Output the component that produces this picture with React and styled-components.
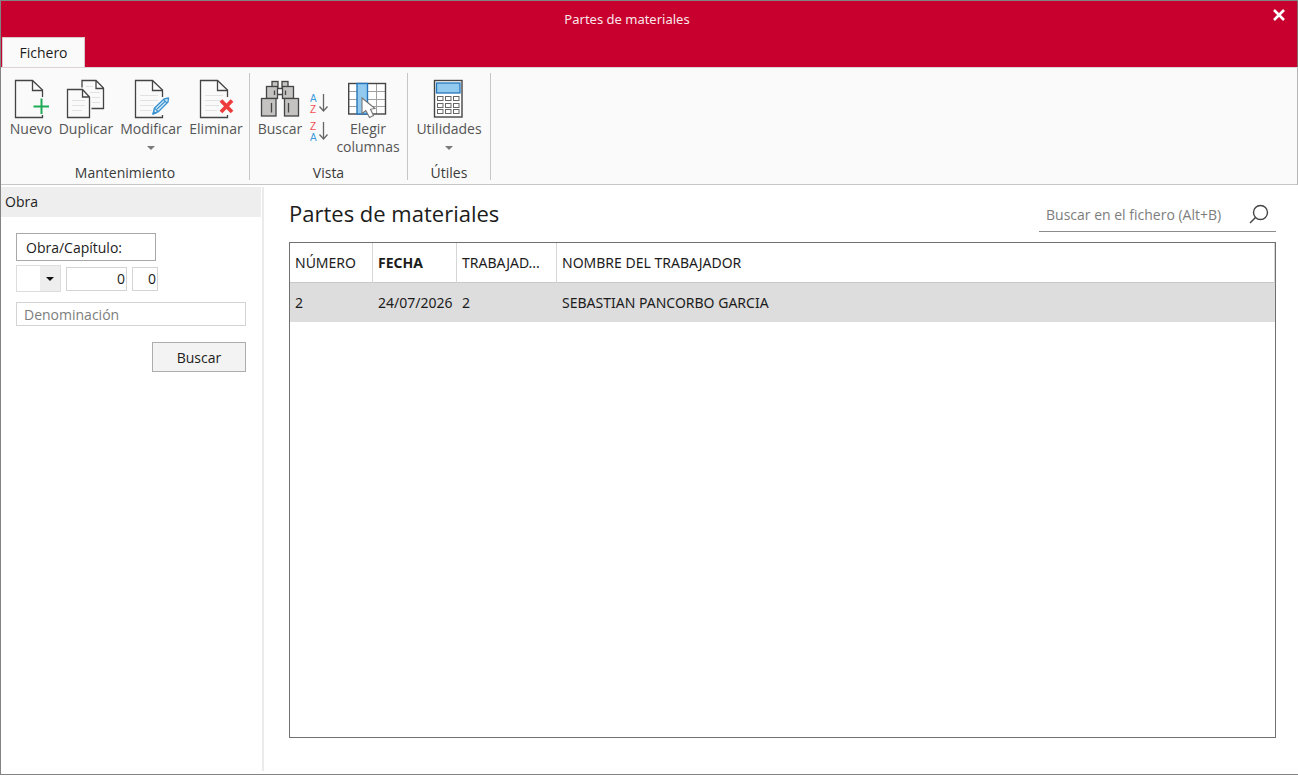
import React from "react";
import styled, { createGlobalStyle } from "styled-components";

const GlobalStyle = createGlobalStyle`
  *, *::before, *::after { box-sizing: border-box; }
  body { margin: 0; background: #fff; }
  body, button, input, select {
    font-family: "Open Sans", "Noto Sans", sans-serif;
    font-size: 14px;
    color: #1c1c1c;
  }
  button { cursor: pointer; }
`;

const Window = styled.div`
  display: flex;
  flex-direction: column;
  min-height: calc(100vh - 1px);
  border: 1px solid #838383;
  border-right: 0;
`;

const TitleBar = styled.header`
  display: grid;
  grid-template-rows: 36px 30px;
  background: #c8002d;
  border-right: 1px solid #85646c;
`;

const TitleRow = styled.div`
  display: grid;
  grid-template-columns: 48px 1fr 48px;
  align-items: center;
`;

const WindowTitle = styled.div`
  grid-column: 2;
  padding-right: 48px;
  margin-right: -4px;
  font-family: "Noto Sans", "Open Sans", sans-serif;
  font-size: 13px;
  text-align: center;
  color: #fae6ea;
`;

const CloseButton = styled.button`
  display: flex;
  justify-content: center;
  align-self: start;
  width: 36px;
  margin-left: 12px;
  padding: 8px 0;
  border: 0;
  background: none;
`;

const Tab = styled.button`
  justify-self: start;
  align-self: end;
  width: 83px;
  height: 30px;
  margin-left: 1px;
  padding: 0;
  border: 1px solid #d9c9cc;
  border-bottom: 0;
  background: #fafafa;
`;

const Ribbon = styled.div`
  display: flex;
  height: 118px;
  padding: 5px 0 4px;
  border-top: 1px solid #dcd3d5;
  border-right: 1px solid #b5b5b5;
  border-bottom: 1px solid #c6c6c6;
  background: #fafafa;
`;

const Group = styled.section`
  display: flex;
  flex-direction: column;
  justify-content: space-between;
  padding: 0 4px;
  border-right: 1px solid #c6c6c6;
`;

const GroupTools = styled.div`
  display: flex;
  align-items: flex-start;
`;

const GroupLabel = styled.div`
  line-height: 14px;
  text-align: center;
  color: #3a3a3a;
`;

const Tool = styled.button`
  display: flex;
  flex-direction: column;
  align-items: center;
  width: ${(p) => p.$width}px;
  padding: 6px 0 0;
  border: 0;
  background: none;
  color: #555;
  line-height: 18px;
  white-space: nowrap;
`;

const ToolIcon = styled.svg`
  display: block;
  width: 40px;
  height: 40px;
  margin-bottom: 1px;
`;

const Caret = styled.span`
  margin-top: 8px;
  border: 4px solid transparent;
  border-top-color: #7a7a7a;
  border-bottom: 0;
`;

const SortTools = styled.div`
  display: flex;
  flex-direction: column;
  width: 27px;
  padding-top: 17px;
`;

const SortButton = styled.button`
  display: flex;
  height: 28px;
  padding: 2px 3px;
  border: 0;
  background: none;
`;

const Body = styled.div`
  display: flex;
  flex: 1;
  padding: 2px 0 3px;
`;

const Sidebar = styled.aside`
  width: 263px;
  border-right: 2px solid #ebebeb;
`;

const SidebarTitle = styled.h2`
  margin: 0;
  padding: 0 4px;
  width: 260px;
  font-size: 14px;
  font-weight: 400;
  line-height: 30px;
  background: #eee;
`;

const Filters = styled.form`
  display: flex;
  flex-direction: column;
  align-items: flex-start;
  padding: 16px 16px 0 15px;
`;

const FieldButton = styled.button`
  width: 140px;
  height: 28px;
  padding: 0 9px;
  border: 1px solid #a8a8a8;
  background: #fff;
  text-align: left;
`;

const FieldRow = styled.div`
  display: flex;
  align-items: center;
  gap: 5px;
  margin: 4px 0 10px;
`;

const SelectBox = styled.div`
  position: relative;
  width: 45px;
  height: 27px;
`;

const Select = styled.select`
  appearance: none;
  width: 100%;
  height: 100%;
  border: 1px solid #ddd;
  border-radius: 0;
  background: linear-gradient(to right, #fff 23px, #eee 23px);
`;

const SelectArrow = styled.span`
  position: absolute;
  right: 7px;
  top: 12px;
  border: 4px solid transparent;
  border-top-color: #111;
  border-bottom: 0;
  pointer-events: none;
`;

const TextField = styled.input`
  width: ${(p) => p.$width || "100%"};
  height: 24px;
  padding: 0 ${(p) => (p.$number ? 1 : 7)}px;
  border: 1px solid #d4d4d4;
  text-align: ${(p) => (p.$number ? "right" : "left")};
  &::placeholder { color: #7d7d7d; opacity: 1; }
`;

const SubmitButton = styled.button`
  align-self: flex-end;
  width: 94px;
  height: 30px;
  margin-top: 16px;
  border: 1px solid #adadad;
  background: #f3f3f3;
`;

const Main = styled.main`
  display: flex;
  flex: 1;
  flex-direction: column;
  padding: 10px 22px 33px 25px;
`;

const MainHeader = styled.div`
  display: flex;
  justify-content: space-between;
  align-items: flex-start;
  margin-bottom: 10px;
`;

const PageTitle = styled.h1`
  margin: 0;
  font-size: 22px;
  font-weight: 400;
  line-height: 32px;
`;

const SearchField = styled.label`
  display: flex;
  align-items: center;
  width: 237px;
  height: 35px;
  padding: 0 7px;
  border-bottom: 1px solid #8c8c8c;
`;

const SearchInput = styled.input`
  flex: 1;
  min-width: 0;
  padding: 0;
  border: 0;
  outline: 0;
  &::placeholder { color: #7d7d7d; opacity: 1; }
`;

const TableFrame = styled.div`
  flex: 1;
  border: 1px solid #707070;
`;

const Table = styled.table`
  width: 100%;
  table-layout: fixed;
  border-collapse: separate;
  border-spacing: 0;
  font-family: "Noto Sans", "Open Sans", sans-serif;
  font-size: 14px;
`;

const HeadCell = styled.th`
  width: ${(p) => p.$width || "auto"};
  height: 40px;
  padding: 0 5px;
  border-right: 1px solid #d6d6d6;
  border-bottom: 1px solid #c8c8c8;
  font-weight: ${(p) => (p.$sorted ? 700 : 400)};
  text-align: left;
  white-space: nowrap;
`;

const Cell = styled.td`
  height: 39px;
  padding: 0 5px;
  background: #ddd;
  white-space: nowrap;
`;

const Page = ({ lines }) => (
  <g fill="none">
    <path d="M31.5 18V11L21.5 1.5H4.5V38.5H31.5V36" fill="none" stroke="#444" strokeWidth="1.3" />
    <path d="M21.5 1.5V11.5H31.5" stroke="#444" strokeWidth="1.3" />
    {lines && <path d="M9 16.5H27M9 21.5H27M9 26.5H23M9 31.5H21" stroke="#e2e2e2" />}
  </g>
);

const NewIcon = () => (
  <ToolIcon viewBox="0 0 40 40" aria-hidden="true">
    <Page />
    <path d="M30.5 19.5V35M22.5 27.5H38" stroke="#1fab55" strokeWidth="2" />
  </ToolIcon>
);

const DuplicateIcon = () => (
  <ToolIcon viewBox="0 0 40 40" aria-hidden="true" fill="none" stroke="#444" strokeWidth="1.3">
    <path d="M16 8.5V1.5H30L37.5 9V29.5H25.5M30 1.5V9.5H37.5" />
    <path d="M1.5 10.5H16.5L23.5 18V38.5H1.5ZM16.5 10.5V18H23.5" />
    <path d="M20 7.5H27M24 13.5H34M26 18.5H34M26 23.5H34M6 21.5H19M6 26.5H19M6 31.5H16" stroke="#e2e2e2" strokeWidth="1" />
  </ToolIcon>
);

const EditIcon = () => (
  <ToolIcon viewBox="0 0 40 40" aria-hidden="true">
    <Page lines />
    <path d="M22 35L23.5 29L33 20L37.5 19L37 23L27.5 32.5Z" fill="#d9edf9" stroke="#3b93cf" strokeWidth="1.4" strokeLinejoin="round" />
    <path d="M24 29.5L27 32.5M32.5 20.5L36 24M26 30L34 22.5M22 35L24.5 34.3L22.7 32.5Z" fill="#3b93cf" stroke="#3b93cf" strokeWidth="1.1" />
  </ToolIcon>
);

const DeleteIcon = () => (
  <ToolIcon viewBox="0 0 40 40" aria-hidden="true">
    <Page lines />
    <path d="M25 21.5L36 33M36 21.5L25 33" stroke="#ee3b3b" strokeWidth="3.8" />
  </ToolIcon>
);

const BinocularsIcon = () => (
  <ToolIcon viewBox="0 0 40 40" aria-hidden="true" fill="#c4c3c2" stroke="#444" strokeWidth="1.3">
    <rect x="12" y="2.5" width="6" height="5.5" />
    <rect x="22" y="2.5" width="6" height="5.5" />
    <path d="M17 9.5H23V15.5H17Z" fill="#fff" />
    <rect x="6.5" y="7.5" width="11" height="12" />
    <rect x="22.5" y="7.5" width="11" height="12" />
    <rect x="1.5" y="19.5" width="14.5" height="17.5" />
    <rect x="24.5" y="19.5" width="14" height="17.5" />
    <path d="M14.5 11.5V16M25.5 11.5V16M11.5 24V33.5M28.5 24V33.5" />
  </ToolIcon>
);

const ColumnsIcon = () => (
  <ToolIcon viewBox="0 0 40 40" aria-hidden="true" fill="none">
    <rect x="0.7" y="4.5" width="36.8" height="30.5" fill="#fff" />
    <path d="M0 12.5H37M0 20.5H37M0 27.5H37M28.5 5V35" stroke="#a0a0a0" />
    <rect x="0.7" y="4.5" width="36.8" height="30.5" stroke="#444" strokeWidth="1.4" />
    <rect x="9" y="4.5" width="10.5" height="30.5" fill="#92c9ef" stroke="#2577bd" strokeWidth="1.4" />
    <path d="M14 19V34.5L17.8 31.5L21.5 38.5L25.5 36.5L22.5 30.3L27 29.5Z" fill="#fff" stroke="#777" strokeWidth="1.1" />
  </ToolIcon>
);

const CalculatorIcon = () => (
  <ToolIcon viewBox="0 0 40 40" aria-hidden="true" fill="#fff" stroke="#444">
    <rect x="5.5" y="1.5" width="27.5" height="36.5" strokeWidth="1.4" />
    <rect x="7.5" y="4" width="23.5" height="10" fill="#92c9ef" stroke="#2577bd" strokeWidth="1.3" />
    {[17.5, 24.5, 30.5].map((y) =>
      [8.5, 16.5, 24.5].map((x) => (
        <rect key={`${x}-${y}`} x={x} y={y} width="5.5" height="4" stroke="#666" />
      ))
    )}
  </ToolIcon>
);

const SortLetters = styled.text`
  font-family: "Liberation Sans", sans-serif;
  font-size: 10px;
`;

const SortIcon = ({ letters }) => (
  <svg width="21" height="24" viewBox="0 0 21 24" aria-hidden="true">
    {letters.map((letter, i) => (
      <SortLetters key={letter} x="1" y={10 + i * 11} fill={letter === "A" ? "#3f9bdc" : "#f05050"}>
        {letter}
      </SortLetters>
    ))}
    <path d="M14.5 2V19M10.5 14.5L14.5 19L18.5 14.5" fill="none" stroke="#666" strokeWidth="1.3" />
  </svg>
);

const columns = [
  { label: "NÚMERO", width: "83px" },
  { label: "FECHA", width: "84px", sorted: true },
  { label: "TRABAJAD...", width: "100px" },
  { label: "NOMBRE DEL TRABAJADOR" },
];

const rows = [["2", "24/07/2026", "2", "SEBASTIAN PANCORBO GARCIA"]];

export default function App() {
  return (
    <>
      <GlobalStyle />
      <Window>
        <TitleBar>
          <TitleRow>
            <WindowTitle>Partes de materiales</WindowTitle>
            <CloseButton type="button" aria-label="Cerrar">
              <svg width="12" height="12" viewBox="0 0 12 12" aria-hidden="true">
                <path d="M1 1L11 11M11 1L1 11" stroke="#fff" strokeWidth="2.6" />
              </svg>
            </CloseButton>
          </TitleRow>
          <Tab type="button">Fichero</Tab>
        </TitleBar>

        <Ribbon>
          <Group>
            <GroupTools>
              <Tool type="button" $width={52}><NewIcon />Nuevo</Tool>
              <Tool type="button" $width={58}><DuplicateIcon />Duplicar</Tool>
              <Tool type="button" $width={72}><EditIcon />Modificar<Caret /></Tool>
              <Tool type="button" $width={58}><DeleteIcon />Eliminar</Tool>
            </GroupTools>
            <GroupLabel>Mantenimiento</GroupLabel>
          </Group>
          <Group>
            <GroupTools>
              <Tool type="button" $width={52}><BinocularsIcon />Buscar</Tool>
              <SortTools>
                <SortButton type="button" aria-label="Orden ascendente"><SortIcon letters={["A", "Z"]} /></SortButton>
                <SortButton type="button" aria-label="Orden descendente"><SortIcon letters={["Z", "A"]} /></SortButton>
              </SortTools>
              <Tool type="button" $width={70}><ColumnsIcon /><span>Elegir<br />columnas</span></Tool>
            </GroupTools>
            <GroupLabel>Vista</GroupLabel>
          </Group>
          <Group>
            <GroupTools>
              <Tool type="button" $width={74}><CalculatorIcon />Utilidades<Caret /></Tool>
            </GroupTools>
            <GroupLabel>Útiles</GroupLabel>
          </Group>
        </Ribbon>

        <Body>
          <Sidebar>
            <SidebarTitle>Obra</SidebarTitle>
            <Filters onSubmit={(e) => e.preventDefault()}>
              <FieldButton type="button">Obra/Capítulo:</FieldButton>
              <FieldRow>
                <SelectBox>
                  <Select aria-label="Serie"><option></option></Select>
                  <SelectArrow />
                </SelectBox>
                <TextField $number $width="61px" aria-label="Obra" defaultValue="0" />
                <TextField $number $width="26px" aria-label="Capítulo" defaultValue="0" />
              </FieldRow>
              <TextField aria-label="Denominación" placeholder="Denominación" />
              <SubmitButton type="submit">Buscar</SubmitButton>
            </Filters>
          </Sidebar>

          <Main>
            <MainHeader>
              <PageTitle>Partes de materiales</PageTitle>
              <SearchField>
                <SearchInput type="text" aria-label="Buscar en el fichero" placeholder="Buscar en el fichero (Alt+B)" />
                <svg width="20" height="20" viewBox="0 0 20 20" fill="none" stroke="#444" strokeWidth="1.4" aria-hidden="true">
                  <circle cx="11.5" cy="8.5" r="7" />
                  <path d="M6.5 13.5L1 19" />
                </svg>
              </SearchField>
            </MainHeader>
            <TableFrame>
              <Table>
                <thead>
                  <tr>
                    {columns.map((c) => (
                      <HeadCell key={c.label} scope="col" $width={c.width} $sorted={c.sorted}>{c.label}</HeadCell>
                    ))}
                  </tr>
                </thead>
                <tbody>
                  {rows.map((row) => (
                    <tr key={row[0]}>
                      {row.map((value, i) => <Cell key={i}>{value}</Cell>)}
                    </tr>
                  ))}
                </tbody>
              </Table>
            </TableFrame>
          </Main>
        </Body>
      </Window>
    </>
  );
}
